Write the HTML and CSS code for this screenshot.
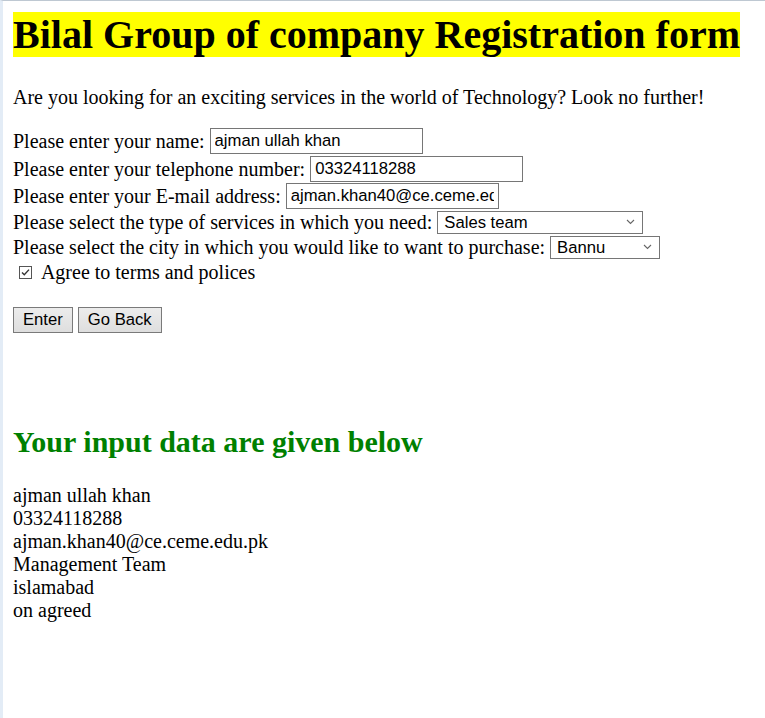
FILE: index.html
```html
<!DOCTYPE html>
<html lang="en">
<head>
<meta charset="utf-8">
<title>Bilal Group of company Registration form</title>
<link rel="stylesheet" href="styles.css">
</head>
<body>
<h1 class="title">Bilal Group of company Registration form</h1>
<p class="intro">Are you looking for an exciting services in the world of Technology? Look no further!</p>
<form class="reg">
  <div class="row row-name">Please enter your name: <input class="field" type="text" value="ajman ullah khan"></div>
  <div class="row row-tel">Please enter your telephone number: <input class="field" type="text" value="03324118288"></div>
  <div class="row row-mail">Please enter your E-mail address: <input class="field" type="text" value="ajman.khan40@ce.ceme.edu.pk"></div>
  <div class="row row-sel">Please select the type of services in which you need: <select class="pick pick-service"><option>Sales team</option><option>Management Team</option></select></div>
  <div class="row row-sel">Please select the city in which you would like to want to purchase: <select class="pick pick-city"><option>Bannu</option><option>islamabad</option></select></div>
  <div class="row row-check"><input class="check" type="checkbox" checked> Agree to terms and polices</div>
  <div class="actions"><button class="btn" type="button">Enter</button> <button class="btn" type="button">Go Back</button></div>
</form>
<section class="result">
  <h2 class="result-title">Your input data are given below</h2>
  <div class="output">
    <div>ajman ullah khan</div>
    <div>03324118288</div>
    <div>ajman.khan40@ce.ceme.edu.pk</div>
    <div>Management Team</div>
    <div>islamabad</div>
    <div>on agreed</div>
  </div>
</section>
</body>
</html>
```

FILE: styles.css
```css
html {
  box-sizing: border-box;
  min-height: 100vh;
  border-top: 1px solid #bec8d2;
  border-left: 3px solid #e3ecf6;
  background: #fff;
}
body {
  margin: 10px;
  font-family: "Liberation Serif", "Times New Roman", serif;
  font-size: 20px;
  color: #000;
}
.title {
  width: fit-content;
  margin: 1px 0 0 0;
  font-size: 40px;
  font-weight: bold;
  line-height: 45px;
  background: #ffff00;
}
.intro {
  margin: 29px 0 0 0;
  line-height: 23px;
}
.reg {
  margin-top: 18px;
}
.row {
  display: flex;
  align-items: center;
  height: 27px;
  white-space: pre;
}
.row-name { height: 27px; padding-top: 1px; box-sizing: border-box; }
.row-tel { height: 28px; padding-top: 2px; box-sizing: border-box; }
.row-mail { height: 27px; padding-top: 1px; box-sizing: border-box; }
.row-sel { height: 25px; padding-top: 1px; box-sizing: border-box; }
.row-check { height: 26px; padding-top: 1px; box-sizing: border-box; }
.field {
  box-sizing: border-box;
  width: 213px;
  height: 26px;
  margin: 0;
  padding: 0 4px;
  border: 1px solid #767676;
  font-family: "Liberation Sans", Arial, sans-serif;
  font-size: 16.67px;
  color: #000;
  background: #fff;
}
.pick {
  appearance: none;
  -webkit-appearance: none;
  box-sizing: border-box;
  height: 23px;
  margin: 0;
  padding: 0 20px 0 6px;
  border: 1px solid #767676;
  border-radius: 0;
  font-family: "Liberation Sans", Arial, sans-serif;
  font-size: 16.67px;
  color: #000;
  background: #fff url("data:image/svg+xml;utf8,<svg xmlns='http://www.w3.org/2000/svg' width='9' height='6' viewBox='0 0 9 6'><path d='M1 1 L4.5 4.5 L8 1' fill='none' stroke='%23666' stroke-width='1.1'/></svg>") no-repeat right 7px center;
}
.pick-service { width: 206px; }
.pick-city { width: 110px; }
.check {
  appearance: none;
  -webkit-appearance: none;
  box-sizing: border-box;
  width: 13px;
  height: 13px;
  margin: 0 5px 0 6px;
  border: 1px solid #555;
  background: #fff url("data:image/svg+xml;utf8,<svg xmlns='http://www.w3.org/2000/svg' width='11' height='11' viewBox='0 0 11 11'><path d='M2 5.5 L4.3 7.8 L9 2.6' fill='none' stroke='%23333' stroke-width='1.4'/></svg>") no-repeat center;
}
.actions {
  display: flex;
  gap: 5px;
  margin-top: 22px;
}
.btn {
  box-sizing: border-box;
  height: 26px;
  margin: 0;
  padding: 0 9px;
  border: 1px solid #7a7a7a;
  border-radius: 0;
  background: linear-gradient(#ececec, #dedede);
  font-family: "Liberation Sans", Arial, sans-serif;
  font-size: 16.67px;
  color: #000;
}
.result {
  margin-top: 92px;
}
.result-title {
  margin: 0 0 25px 0;
  font-size: 30px;
  font-weight: bold;
  line-height: 34px;
  color: #008000;
}
.output {
  line-height: 23px;
}
```
